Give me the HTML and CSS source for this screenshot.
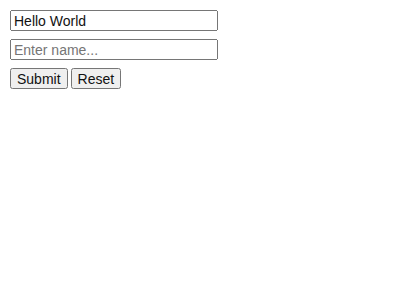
FILE: index.html
```html
<!DOCTYPE html>
<html>
<head>
<meta charset="utf-8">
<link rel="stylesheet" href="styles.css">
</head>
<body>
<div class="form">
  <input class="field" type="text" value="Hello World">
  <input class="field" type="text" placeholder="Enter name...">
  <div class="actions">
    <button class="btn">Submit</button>
    <button class="btn">Reset</button>
  </div>
</div>
</body>
</html>
```
FILE: styles.css
```css
body {
  margin: 10px;
  background: #fff;
  font-family: "Liberation Sans", Arial, sans-serif;
}
.form {
  display: flex;
  flex-direction: column;
  align-items: flex-start;
  gap: 8px;
}
.field {
  width: 208px;
  height: 21px;
  box-sizing: border-box;
  font-family: "Liberation Sans", Arial, sans-serif;
  font-size: 14px;
  padding: 1px 2px;
  color: #111;
}
.actions {
  display: flex;
  gap: 3px;
}
.btn {
  font-family: "Liberation Sans", Arial, sans-serif;
  font-size: 14px;
  height: 21px;
  padding: 1px 5px;
  color: #111;
}
```
